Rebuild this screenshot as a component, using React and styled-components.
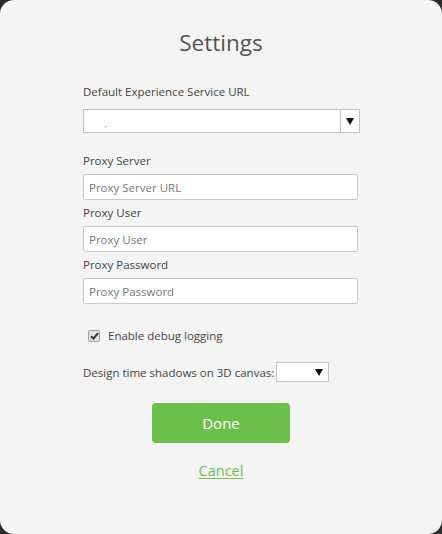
import React from "react";
import styled, { createGlobalStyle } from "styled-components";

const Global = createGlobalStyle`
  html, body { margin: 0; padding: 0; background: #2b2b2b; }
  body { font-family: "Open Sans", "Noto Sans", sans-serif; }
`;

const Dialog = styled.div`
  width: 442px;
  height: 534px;
  box-sizing: border-box;
  background: #f4f4f4;
  border-radius: 14px;
  padding: 28px 0 0 83px;
  display: flex;
  flex-direction: column;
`;

const Title = styled.h1`
  margin: 0 0 0 -83px;
  width: 442px;
  text-align: center;
  font-weight: 400;
  font-size: 22.5px;
  line-height: 30px;
  color: #555;
`;

const Label = styled.div`
  font-size: 11.5px;
  line-height: 16px;
  color: #444;
  margin-top: ${(p) => p.$mt || 0}px;
  margin-bottom: ${(p) => p.$mb || 5}px;
`;

const SelectBox = styled.div`
  box-sizing: border-box;
  width: ${(p) => p.$w}px;
  height: ${(p) => p.$h}px;
  background: #fff;
  border: 1px solid #c4c4c4;
  display: flex;
  align-items: stretch;
`;

const SelectValue = styled.div`
  flex: 1;
  position: relative;
`;

const Dot = styled.span`
  position: absolute;
  left: 21px;
  top: 16px;
  width: 1px;
  height: 1px;
  background: #777;
`;

const ArrowCell = styled.div`
  width: ${(p) => p.$w}px;
  display: flex;
  align-items: center;
  justify-content: center;
  border-left: ${(p) => (p.$divider ? "1px solid #c4c4c4" : "none")};
`;

const Arrow = () => (
  <svg width="8" height="8" viewBox="0 0 8 8">
    <path d="M0 1 H8 L4 8 Z" fill="#111" />
  </svg>
);

const Input = styled.input`
  box-sizing: border-box;
  width: 275px;
  height: 26px;
  border: 1px solid #c8c8c8;
  border-radius: 2px;
  background: #fff;
  padding: 0 5px;
  font-family: "Open Sans", "Noto Sans", sans-serif;
  font-size: 11.5px;
  color: #333;
  outline: none;
  &::placeholder { color: #777; }
`;

const CheckRow = styled.label`
  display: flex;
  align-items: center;
  gap: 8px;
  margin: 24px 0 0 5px;
  font-size: 11.5px;
  color: #444;
  line-height: 16px;
`;

const Check = styled.span`
  box-sizing: border-box;
  width: 12px;
  height: 12px;
  border: 1px solid #a0a0a0;
  border-radius: 2px;
  background: #e2e2e2;
  display: flex;
  align-items: center;
  justify-content: center;
`;

const ShadowRow = styled.div`
  display: flex;
  align-items: center;
  gap: 2px;
  margin-top: 18px;
  font-size: 11.5px;
  color: #444;
`;

const Actions = styled.div`
  margin-left: -83px;
  width: 442px;
  display: flex;
  flex-direction: column;
  align-items: center;
`;

const DoneButton = styled.button`
  margin-top: 21px;
  width: 138px;
  height: 40px;
  border: none;
  border-radius: 4px;
  background: #6cbf4a;
  color: #fff;
  font-family: "Open Sans", "Noto Sans", sans-serif;
  font-size: 15px;
  cursor: pointer;
`;

const CancelLink = styled.a`
  margin-top: 18px;
  font-size: 14.5px;
  line-height: 20px;
  color: #6cbf4a;
  text-decoration: underline;
  text-underline-offset: 2px;
  cursor: pointer;
`;

export default function App() {
  return (
    <>
      <Global />
      <Dialog>
        <Title>Settings</Title>
        <Label $mt={26} $mb={9}>Default Experience Service URL</Label>
        <SelectBox $w={277} $h={24}>
          <SelectValue>
            <Dot />
          </SelectValue>
          <ArrowCell $w={18} $divider>
            <Arrow />
          </ArrowCell>
        </SelectBox>
        <Label $mt={20} $mb={5}>Proxy Server</Label>
        <Input placeholder="Proxy Server URL" />
        <Label $mt={5} $mb={5}>Proxy User</Label>
        <Input placeholder="Proxy User" />
        <Label $mt={5} $mb={5}>Proxy Password</Label>
        <Input placeholder="Proxy Password" />
        <CheckRow>
          <Check>
            <svg width="9" height="8" viewBox="0 0 9 8">
              <path d="M1 4.2 L3.4 6.6 L8 1.2" stroke="#333" strokeWidth="2" fill="none" />
            </svg>
          </Check>
          Enable debug logging
        </CheckRow>
        <ShadowRow>
          Design time shadows on 3D canvas:
          <SelectBox $w={53} $h={20}>
            <SelectValue />
            <ArrowCell $w={18}>
              <Arrow />
            </ArrowCell>
          </SelectBox>
        </ShadowRow>
        <Actions>
          <DoneButton>Done</DoneButton>
          <CancelLink>Cancel</CancelLink>
        </Actions>
      </Dialog>
    </>
  );
}
